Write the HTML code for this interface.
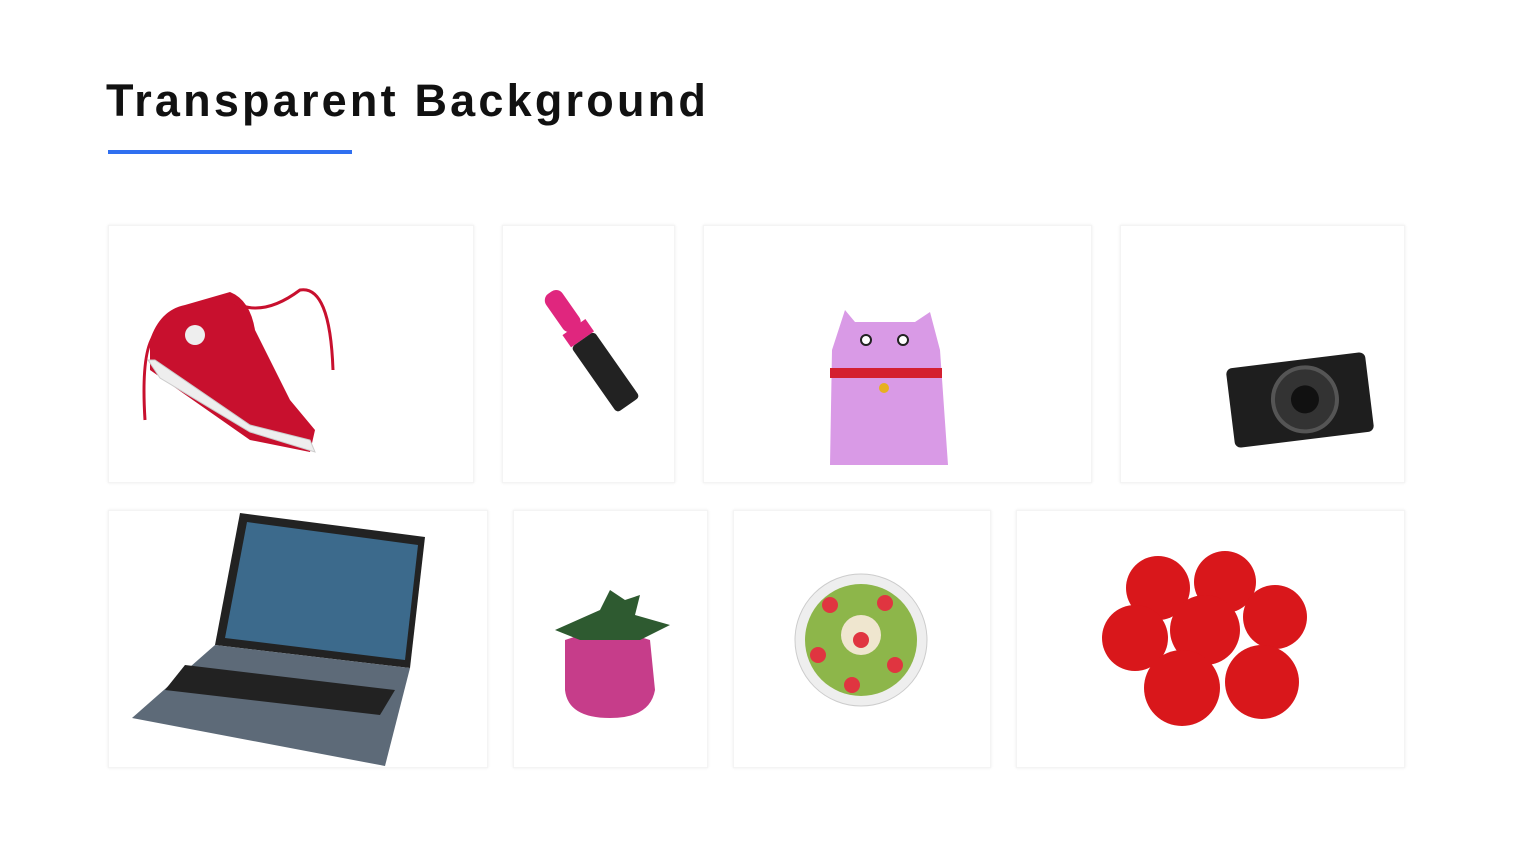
<!DOCTYPE html>
<html><head><style>
body{margin:0;width:1513px;height:851px;background:#fff;position:relative;overflow:hidden;font-family:"Liberation Sans",sans-serif}
h1{position:absolute;left:106px;top:75px;margin:0;font-size:45px;font-weight:bold;color:#111;letter-spacing:3.2px}
.ul{position:absolute;left:108px;top:150px;width:244px;height:4px;background:#2f6ff0}
.c{position:absolute;background:#fff;box-shadow:0 0 3px rgba(0,0,0,0.08);border:1px solid #f4f4f4;box-sizing:border-box}
svg{position:absolute}
</style></head><body>
<h1>Transparent Background</h1>
<div class="ul"></div>
<div class="c" style="left:108px;top:225px;width:366px;height:258px"></div>
<div class="c" style="left:502px;top:225px;width:173px;height:258px"></div>
<div class="c" style="left:703px;top:225px;width:389px;height:258px"></div>
<div class="c" style="left:1120px;top:225px;width:285px;height:258px"></div>
<div class="c" style="left:108px;top:510px;width:380px;height:258px"></div>
<div class="c" style="left:513px;top:510px;width:195px;height:258px"></div>
<div class="c" style="left:733px;top:510px;width:258px;height:258px"></div>
<div class="c" style="left:1016px;top:510px;width:389px;height:258px"></div>
<svg width="1513" height="851" style="left:0;top:0">
<!-- shoe -->
<path d="M150 340 Q160 310 185 305 L230 292 Q250 300 255 330 L290 400 L315 430 L310 452 L250 440 L150 370 Z" fill="#c8102e"/>
<path d="M148 360 L160 378 L250 432 L315 452 L310 440 L250 425 L155 360Z" fill="#eee" stroke="#ccc"/>
<path d="M230 300 Q260 320 300 290 Q330 285 333 370" stroke="#c8102e" stroke-width="3" fill="none"/>
<path d="M160 330 Q140 340 145 420" stroke="#c8102e" stroke-width="3" fill="none"/>
<circle cx="195" cy="335" r="10" fill="#eee"/>
<!-- lipstick -->
<g transform="rotate(-35 590 350)"><rect x="580" y="280" width="20" height="45" rx="8" fill="#e0267e"/><rect x="576" y="322" width="28" height="15" fill="#e0267e"/><rect x="576" y="337" width="28" height="80" rx="4" fill="#222"/></g>
<!-- cat -->
<path d="M845 310 L855 322 L915 322 L930 312 L940 350 L948 465 L830 465 L832 350 Z" fill="#d99ae6"/>
<rect x="830" y="368" width="112" height="10" fill="#d42030"/>
<circle cx="884" cy="388" r="5" fill="#e7b020"/>
<circle cx="866" cy="340" r="5" fill="#fff" stroke="#222" stroke-width="2"/><circle cx="903" cy="340" r="5" fill="#fff" stroke="#222" stroke-width="2"/>
<!-- camera -->
<g transform="rotate(-7 1300 400)"><rect x="1230" y="360" width="140" height="80" rx="6" fill="#1e1e1e"/><circle cx="1305" cy="400" r="32" fill="#333" stroke="#555" stroke-width="4"/><circle cx="1305" cy="400" r="14" fill="#111"/></g>
<!-- laptop -->
<path d="M240 513 L425 537 L410 668 L215 645 Z" fill="#222"/>
<path d="M247 522 L418 545 L405 660 L225 638 Z" fill="#3c6a8c"/>
<path d="M215 645 L410 668 L385 766 L132 718 Z" fill="#5d6a78"/>
<path d="M185 665 L395 690 L380 715 L165 690Z" fill="#222"/>
<!-- plant -->
<path d="M565 640 Q605 625 650 640 L655 690 Q650 718 610 718 Q568 718 565 690 Z" fill="#c63d8a"/>
<path d="M555 630 L600 610 L610 590 L625 600 L640 595 L635 615 L670 625 L640 640 L580 640 Z" fill="#2e5a30"/>
<!-- bowl -->
<circle cx="861" cy="640" r="66" fill="#eee" stroke="#ccc"/>
<circle cx="861" cy="640" r="56" fill="#8db64a"/>
<circle cx="861" cy="635" r="20" fill="#efe6cf"/>
<circle cx="830" cy="605" r="8" fill="#e03540"/><circle cx="885" cy="603" r="8" fill="#e03540"/><circle cx="818" cy="655" r="8" fill="#e03540"/><circle cx="895" cy="665" r="8" fill="#e03540"/><circle cx="852" cy="685" r="8" fill="#e03540"/><circle cx="861" cy="640" r="8" fill="#e03540"/>
<!-- tomatoes -->
<g fill="#d9171b"><circle cx="1158" cy="588" r="32"/><circle cx="1225" cy="582" r="31"/><circle cx="1275" cy="617" r="32"/><circle cx="1135" cy="638" r="33"/><circle cx="1205" cy="630" r="35"/><circle cx="1262" cy="682" r="37"/><circle cx="1182" cy="688" r="38"/></g>
</svg>
</body></html>
